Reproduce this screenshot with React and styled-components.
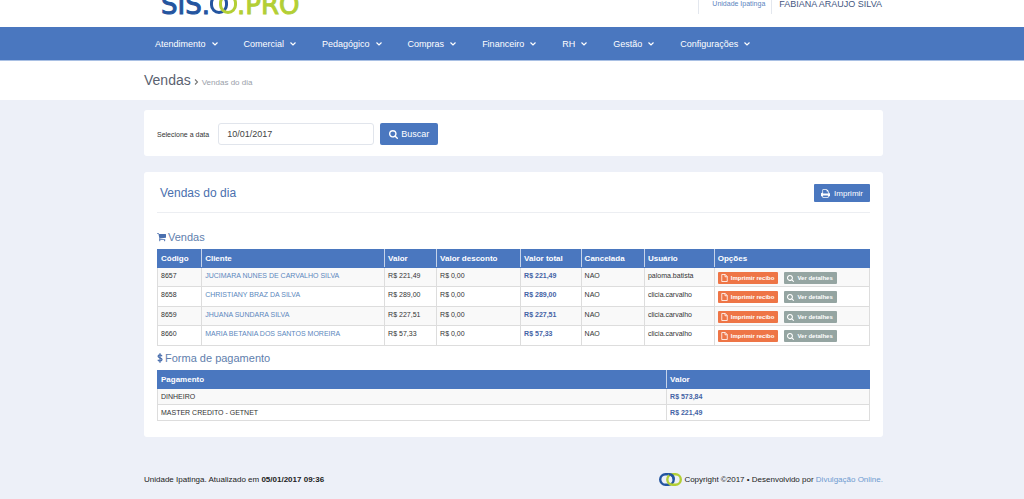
import React, { useState } from "react";
import styled, { createGlobalStyle } from "styled-components";

const menu = [
  "Atendimento",
  "Comercial",
  "Pedagógico",
  "Compras",
  "Financeiro",
  "RH",
  "Gestão",
  "Configurações",
];

const sales = [
  {
    code: "8657",
    client: "JUCIMARA NUNES DE CARVALHO SILVA",
    value: "R$ 221,49",
    user: "paloma.batista",
  },
  {
    code: "8658",
    client: "CHRISTIANY BRAZ DA SILVA",
    value: "R$ 289,00",
    user: "clicia.carvalho",
  },
  {
    code: "8659",
    client: "JHUANA SUNDARA SILVA",
    value: "R$ 227,51",
    user: "clicia.carvalho",
  },
  {
    code: "8660",
    client: "MARIA BETANIA DOS SANTOS MOREIRA",
    value: "R$ 57,33",
    user: "clicia.carvalho",
  },
];

const payments = [
  { type: "DINHEIRO", value: "R$ 573,84" },
  { type: "MASTER CREDITO - GETNET", value: "R$ 221,49" },
];

// icons

const SearchIcon = ({ size }) => (
  <svg width={size} height={size} viewBox="64 128 1664 1664" fill="currentColor">
    <path d="M1216 832q0-185-131.5-316.5T768 384 451.500 515.500 320 832t131.500 316.500T768 1280t316.500-131.500T1216 832zm512 832q0 52-38 90t-90 38q-54 0-90-38l-343-342q-179 124-399 124-143 0-273.500-55.500t-225-150-150-225T64 832t55.500-273.500 150-225 225-150T768 128t273.500 55.500 225 150 150 225T1472 832q0 220-124 399l343 343q37 37 37 90z" />
  </svg>
);

const PrintIcon = () => (
  <svg width="9" height="9" viewBox="64 64 1664 1664" fill="currentColor">
    <path d="M448 1536h896v-256H448v256zm0-640h896V512h-160q-40 0-68-28t-28-68V256H448v640zm1152 64q0-26-19-45t-45-19-45 19-19 45 19 45 45 19 45-19 19-45zm128 0v416q0 13-9.500 22.500t-22.500 9.500h-224v160q0 40-28 68t-68 28H416q-40 0-68-28t-28-68v-160H96q-13 0-22.500-9.500T64 1376V960q0-79 56.500-135.500T256 768h64V224q0-40 28-68t68-28h672q40 0 88 20t76 48l152 152q28 28 48 76t20 88v256h64q79 0 135.500 56.500T1728 960z" />
  </svg>
);

const CartIcon = () => (
  <svg width="9" height="9" viewBox="64 128 1664 1664" fill="currentColor">
    <path d="M704 1536q0 52-38 90t-90 38-90-38-38-90 38-90 90-38 90 38 38 90zm896 0q0 52-38 90t-90 38-90-38-38-90 38-90 90-38 90 38 38 90zm128-1088v512q0 24-16.500 42.500T1671 1024l-1044 122q13 60 13 70 0 16-24 64h920q26 0 45 19t19 45-19 45-45 19H512q-26 0-45-19t-19-45q0-11 8-31.500t16-36 21.500-40T509 1143L332 320H128q-26 0-45-19t-19-45 19-45 45-19h256q16 0 28.500 6.500T432 214t13 24.500 8 26 5.500 29.500 4.500 26H1664q26 0 45 19t19 45z" />
  </svg>
);

const DollarIcon = () => (
  <svg width="6" height="10" viewBox="0 0 6 10" fill="none" stroke="currentColor" strokeWidth="1.3">
    <path d="M5 3.200C4.600 2.300 3.900 1.900 3 1.900 1.900 1.900 1.100 2.400 1.100 3.300 1.100 5.300 5 4.500 5 6.600 5 7.600 4.200 8.100 3 8.100 2 8.100 1.200 7.700 0.900 6.800M3 0.300V9.700" />
  </svg>
);

const FileIcon = () => (
  <svg width="7" height="8" viewBox="0 0 14 16" fill="none" stroke="currentColor" strokeWidth="1.6">
    <path d="M1.500 1H8.500L12.500 5V15H1.500ZM8 1V5.500H12.500" />
  </svg>
);

const ArrowDown = () => (
  <svg width="6" height="4" viewBox="0 0 6 4" fill="none" stroke="currentColor" strokeWidth="1.2">
    <path d="M0.500 0.500L3 3L5.500 0.500" />
  </svg>
);

const ArrowRight = () => (
  <svg width="5" height="6" viewBox="0 0 5 6" fill="none" stroke="currentColor" strokeWidth="1.1">
    <path d="M1 0.500L3.500 3L1 5.500" />
  </svg>
);

const LogoRings = () => (
  <svg width="27" height="20" viewBox="0 0 27 20" fill="none" strokeWidth="3">
    <rect x="1.5" y="1.5" width="15" height="17" rx="7.5" stroke="#24559f" />
    <rect x="10.5" y="1.5" width="15" height="17" rx="7.5" stroke="#b3cf35" />
  </svg>
);

const FooterRings = () => (
  <svg width="23" height="13" viewBox="0 0 23 13" fill="none" strokeWidth="2.4">
    <rect x="1.200" y="1.200" width="13.500" height="10.600" rx="5.300" stroke="#24559f" />
    <rect x="8.300" y="1.200" width="13.500" height="10.600" rx="5.300" stroke="#b3cf35" />
    <path d="M10 1.200C13 1.400 14.700 3.500 14.700 6.500" stroke="#24559f" />
  </svg>
);

function App() {
  const [date, setDate] = useState("10/01/2017");

  return (
    <>
      <GlobalStyle />
      <Header>
        <Logo href="#">
          <LogoText color="#24559f">SIS.</LogoText>
          <LogoRings />
          <LogoText color="#b3cf35">.PRO</LogoText>
        </Logo>
        <UserInfo>
          <Unit href="#">Unidade Ipatinga</Unit>
          <UserName>FABIANA ARAUJO SILVA</UserName>
        </UserInfo>
      </Header>

      <Nav>
        {menu.map((item) => (
          <NavButton key={item} type="button">
            {item}
            <ArrowDown />
          </NavButton>
        ))}
      </Nav>

      <TitleBar>
        <PageTitle>Vendas</PageTitle>
        <ArrowRight />
        <Crumb>Vendas do dia</Crumb>
      </TitleBar>

      <Main>
        <SearchPanel onSubmit={(e) => e.preventDefault()}>
          <Label htmlFor="date">Selecione a data</Label>
          <DateInput
            id="date"
            type="text"
            value={date}
            onChange={(e) => setDate(e.target.value)}
          />
          <SearchButton type="submit">
            <SearchIcon size={9} />
            Buscar
          </SearchButton>
        </SearchPanel>

        <Panel>
          <PanelHeader>
            <PanelTitle>Vendas do dia</PanelTitle>
            <PrintButton type="button">
              <PrintIcon />
              Imprimir
            </PrintButton>
          </PanelHeader>

          <SectionTitle>
            <CartIcon />
            Vendas
          </SectionTitle>
          <Table>
            <colgroup>
              <Col width="6.2%" />
              <Col width="25.7%" />
              <Col width="7.3%" />
              <Col width="11.8%" />
              <Col width="8.5%" />
              <Col width="8.9%" />
              <Col width="9.8%" />
              <Col />
            </colgroup>
            <thead>
              <tr>
                <Th>Código</Th>
                <Th>Cliente</Th>
                <Th>Valor</Th>
                <Th>Valor desconto</Th>
                <Th>Valor total</Th>
                <Th>Cancelada</Th>
                <Th>Usuário</Th>
                <Th>Opções</Th>
              </tr>
            </thead>
            <tbody>
              {sales.map((sale) => (
                <SaleRow key={sale.code}>
                  <Td>{sale.code}</Td>
                  <Td>
                    <ClientLink href="#">{sale.client}</ClientLink>
                  </Td>
                  <Td>{sale.value}</Td>
                  <Td>R$ 0,00</Td>
                  <Td>
                    <Amount>{sale.value}</Amount>
                  </Td>
                  <Td>NAO</Td>
                  <Td>{sale.user}</Td>
                  <Td>
                    <Options>
                      <SmallButton type="button" color="#ee7546">
                        <FileIcon />
                        Imprimir recibo
                      </SmallButton>
                      <SmallButton type="button" color="#95a5a2">
                        <SearchIcon size={7} />
                        Ver detalhes
                      </SmallButton>
                    </Options>
                  </Td>
                </SaleRow>
              ))}
            </tbody>
          </Table>

          <SectionTitle>
            <DollarIcon />
            Forma de pagamento
          </SectionTitle>
          <Table>
            <colgroup>
              <Col width="71.5%" />
              <Col />
            </colgroup>
            <thead>
              <tr>
                <Th>Pagamento</Th>
                <Th>Valor</Th>
              </tr>
            </thead>
            <tbody>
              {payments.map((payment) => (
                <Row key={payment.type}>
                  <Td>{payment.type}</Td>
                  <Td>
                    <Amount>{payment.value}</Amount>
                  </Td>
                </Row>
              ))}
            </tbody>
          </Table>
        </Panel>
      </Main>

      <Footer>
        <span>
          Unidade Ipatinga. Atualizado em <b>05/01/2017 09:36</b>
        </span>
        <Copyright>
          <FooterRings />
          <span>
            Copyright ©2017 • Desenvolvido por{" "}
            <FooterLink href="#">Divulgação Online.</FooterLink>
          </span>
        </Copyright>
      </Footer>
    </>
  );
}

export default App;

// styled-components

const GlobalStyle = createGlobalStyle`
  * {
    box-sizing: border-box;
  }

  body {
    margin: 0;
    background: #edf0f8;
    color: #333;
    font-family: "Liberation Sans", Arial, sans-serif;
    font-size: 8px;
  }

  button, input {
    font-family: inherit;
  }

  a {
    text-decoration: none;
  }
`;

const Header = styled.header`
  display: flex;
  justify-content: space-between;
  align-items: flex-end;
  height: 27px;
  padding: 0 142px 13px 161px;
  background: #fff;
`;

const Logo = styled.a`
  display: flex;
  align-items: flex-end;
`;

const LogoText = styled.span`
  color: ${(props) => props.color};
  font-family: "DejaVu Sans", sans-serif;
  font-size: 26px;
  line-height: 18px;
  -webkit-text-stroke: 1px ${(props) => props.color};
`;

const UserInfo = styled.div`
  display: flex;
  align-items: center;
  height: 20px;
`;

const Unit = styled.a`
  padding: 4px 6px 4px 13px;
  border: solid #e3e7ee;
  border-width: 0 1px;
  color: #5b84c0;
  font-size: 7px;
  line-height: 12px;
`;

const UserName = styled.span`
  padding-left: 7px;
  color: #44577f;
  font-size: 9px;
`;

const Nav = styled.nav`
  display: flex;
  gap: 26px;
  height: 34px;
  padding: 0 155px;
  border-bottom: 1px solid #a9c0e4;
  background: #4a77bf;
`;

const NavButton = styled.button`
  display: flex;
  align-items: center;
  gap: 6px;
  padding: 0;
  border: 0;
  background: none;
  color: #fff;
  font-size: 9px;
`;

const TitleBar = styled.div`
  display: flex;
  align-items: baseline;
  gap: 3px;
  height: 39px;
  padding: 10px 144px 0;
  background: #fff;
  color: #777;
`;

const PageTitle = styled.h1`
  margin: 0;
  color: #5a6270;
  font-size: 14px;
  font-weight: normal;
  line-height: 18px;
`;

const Crumb = styled.span`
  color: #9aa0aa;
  font-size: 8px;
`;

const Main = styled.main`
  display: flex;
  flex-direction: column;
  gap: 16px;
  padding: 10px 141px 0 144px;
`;

const SearchPanel = styled.form`
  display: flex;
  align-items: center;
  padding: 13px 13px 11px;
  border-radius: 3px;
  background: #fff;
`;

const Label = styled.label`
  margin-right: 9px;
  font-size: 7px;
`;

const DateInput = styled.input`
  width: 156px;
  height: 22px;
  margin-right: 6px;
  padding: 0 8px;
  border: 1px solid #e1e5ec;
  border-radius: 3px;
  color: #444;
  font-size: 9px;
`;

const Button = styled.button`
  display: flex;
  align-items: center;
  justify-content: center;
  border: 0;
  border-radius: 2px;
  background: #4a77bf;
  color: #fff;
`;

const SearchButton = styled(Button)`
  gap: 3px;
  height: 22px;
  padding: 0 9px;
  font-size: 9px;
`;

const PrintButton = styled(Button)`
  gap: 4px;
  height: 18px;
  padding: 0 7px;
  border-radius: 1px;
  font-size: 8px;
`;

const Panel = styled.section`
  padding: 12px 13px 16px;
  border-radius: 3px;
  background: #fff;
`;

const PanelHeader = styled.div`
  display: flex;
  align-items: flex-start;
  justify-content: space-between;
  height: 29px;
  margin-bottom: 12px;
  border-bottom: 1px solid #eceef2;
`;

const PanelTitle = styled.h2`
  margin: 0;
  padding-left: 3px;
  color: #4a6fae;
  font-size: 12px;
  font-weight: normal;
  line-height: 18px;
`;

const SectionTitle = styled.h3`
  display: flex;
  align-items: center;
  gap: 2px;
  height: 24px;
  margin: 0;
  color: #5f80ad;
  font-size: 11px;
  font-weight: normal;

  svg {
    color: #4a6fae;
  }
`;

const Table = styled.table`
  width: 100%;
  border-collapse: collapse;
  table-layout: fixed;
`;

const Col = styled.col`
  width: ${(props) => props.width || "auto"};
`;

const Th = styled.th`
  height: 18px;
  padding: 0 3px;
  border: 1px solid #4a77bf;
  border-right-color: #c5d3ea;
  background: #4a77bf;
  color: #fff;
  font-size: 8px;
  text-align: left;

  &:last-child {
    border-right-color: #4a77bf;
  }
`;

const Td = styled.td`
  padding: 3px 3px 2px;
  border: 1px solid #ddd;
  font-size: 7px;
  line-height: 10px;
  vertical-align: top;
  white-space: nowrap;
`;

const Row = styled.tr`
  &:nth-child(odd) {
    background: #f9f9f9;
  }
`;

const SaleRow = styled(Row)`
  height: 19px;

  &:nth-child(even) {
    height: 20px;
  }
`;

const ClientLink = styled.a`
  color: #5b87bd;
`;

const Amount = styled.b`
  color: #4463a5;
`;

const Options = styled.div`
  display: flex;
  gap: 6px;
  padding-top: 1px;
`;

const SmallButton = styled(Button)`
  gap: 3px;
  height: 12px;
  padding: 0 4px 0 3px;
  border-radius: 1px;
  background: ${(props) => props.color};
  font-size: 6px;
  font-weight: bold;
`;

const Footer = styled.footer`
  display: flex;
  align-items: center;
  justify-content: space-between;
  padding: 36px 141px 11px 144px;
  color: #222;
`;

const Copyright = styled.div`
  display: flex;
  align-items: center;
  gap: 2px;
`;

const FooterLink = styled.a`
  color: #6d9bd0;
`;
